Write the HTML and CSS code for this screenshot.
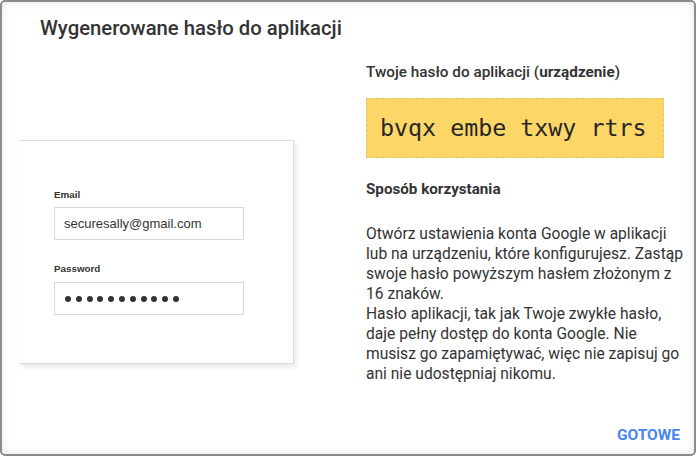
FILE: index.html
```html
<!DOCTYPE html>
<html lang="pl">
<head>
<meta charset="utf-8">
<title>Wygenerowane hasło do aplikacji</title>
<link rel="stylesheet" href="styles.css">
</head>
<body>
<div class="dialog">
  <h1 class="title">Wygenerowane hasło do aplikacji</h1>
  <div class="content">
    <div class="preview">
      <div class="card">
        <div class="field-label">Email</div>
        <div class="field">securesally@gmail.com</div>
        <div class="field-label second">Password</div>
        <div class="field dots">
          <span class="dot"></span><span class="dot"></span><span class="dot"></span><span class="dot"></span><span class="dot"></span><span class="dot"></span><span class="dot"></span><span class="dot"></span><span class="dot"></span><span class="dot"></span><span class="dot"></span>
        </div>
      </div>
    </div>
    <div class="info">
      <div class="subtitle">Twoje hasło do aplikacji (<b>urządzenie</b>)</div>
      <div class="password">bvqx embe txwy rtrs</div>
      <div class="howto">Sposób korzystania</div>
      <p class="desc">Otwórz ustawienia konta Google w aplikacji lub na urządzeniu, które konfigurujesz. Zastąp swoje hasło powyższym hasłem złożonym z 16 znaków.<br>Hasło aplikacji, tak jak Twoje zwykłe hasło, daje pełny dostęp do konta Google. Nie musisz go zapamiętywać, więc nie zapisuj go ani nie udostępniaj nikomu.</p>
    </div>
  </div>
  <div class="footer"><span class="done">GOTOWE</span></div>
</div>
</body>
</html>
```

FILE: styles.css
```css
html, body {
  margin: 0;
  padding: 0;
  background: #ffffff;
}

body {
  font-family: Roboto, "Liberation Sans", Arial, sans-serif;
  color: #333333;
}

.dialog {
  box-sizing: border-box;
  width: 696px;
  height: 456px;
  border: 2px solid #8c8c8c;
  border-radius: 5px;
  box-shadow: inset 0 0 10px rgba(0, 0, 0, 0.10);
  display: flex;
  flex-direction: column;
  background: #ffffff;
}

.title {
  margin: 0;
  padding: 14px 0 0 38px;
  font-size: 20.3px;
  line-height: 24px;
  font-weight: 500;
  color: #333333;
}

.content {
  display: flex;
  padding-left: 18px;
}

.preview {
  width: 274px;
  padding-top: 100px;
  margin-right: 72px;
}

.card {
  box-sizing: border-box;
  width: 274px;
  height: 224px;
  border: 1px solid #dcdcdc;
  border-left: none;
  background: #ffffff;
  box-shadow: 2px 3px 5px rgba(0, 0, 0, 0.10);
  padding: 48px 0 0 34px;
  font-family: "Liberation Sans", Arial, sans-serif;
}

.field-label {
  font-size: 9.8px;
  line-height: 12px;
  font-weight: bold;
  color: #333333;
  margin-bottom: 6px;
}

.field-label.second {
  margin-top: 23px;
  margin-bottom: 7px;
}

.field {
  box-sizing: border-box;
  width: 190px;
  height: 33px;
  border: 1px solid #d9d9d9;
  padding-left: 9px;
  font-size: 13px;
  line-height: 31px;
  color: #333333;
}

.dots {
  display: flex;
  align-items: center;
  gap: 4.8px;
  padding-left: 10px;
}

.dot {
  width: 6px;
  height: 6px;
  border-radius: 50%;
  background: #333333;
}

.info {
  width: 317px;
  padding-top: 22px;
}

.subtitle {
  font-size: 15.3px;
  line-height: 20px;
  font-weight: 500;
  color: #333333;
  white-space: nowrap;
}

.subtitle b {
  font-weight: 700;
}

.password {
  box-sizing: border-box;
  margin-top: 16px;
  width: 298px;
  height: 60px;
  background: #fdd668;
  border: 1px dashed #e2c36a;
  font-family: "DejaVu Sans Mono", "Liberation Mono", monospace;
  font-size: 23.3px;
  line-height: 58px;
  padding-left: 13px;
  color: #262626;
}

.howto {
  margin-top: 21px;
  font-size: 15.2px;
  line-height: 20px;
  font-weight: 700;
  color: #333333;
}

.desc {
  margin: 25px 0 0 0;
  font-size: 15.6px;
  line-height: 20px;
  color: #333333;
}

.footer {
  margin-top: auto;
  display: flex;
  justify-content: flex-end;
  padding: 0 14px 9px 0;
}

.done {
  font-size: 15.5px;
  line-height: 20px;
  font-weight: 700;
  color: #4a86f0;
}
```
